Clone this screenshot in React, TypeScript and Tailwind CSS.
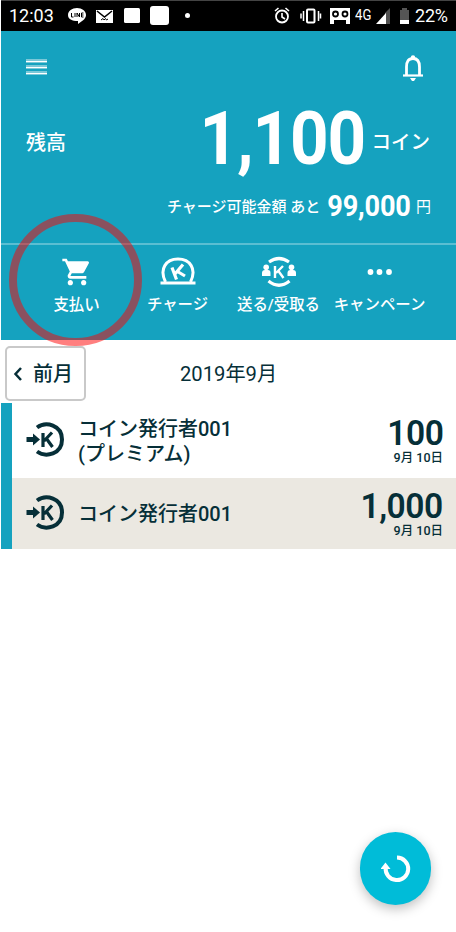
import type { ReactNode } from 'react';
import { MdShoppingCart } from 'react-icons/md';

function StatusBar() {
  return (
    <div className="flex h-[31px] items-center border-t border-[#444] bg-black text-white">
      <span className="ml-2 w-[59px] whitespace-nowrap text-[18px] leading-none">12:03</span>
      <svg width="130" height="30" viewBox="68 1 130 30" fill="currentColor">
        <path d="M77 8c5 0 9 3 9 7 0 3-2 5-8 9v-3c-6 0-10-2-10-6s4-7 9-7z" />
        <path d="M71.500 13v4h2M75 13v4M77 17v-4l2.500 4v-4M83.500 13h-2v4h2M81.500 15h2" fill="none" stroke="#000" />
        <path d="M96 10h17v13H96z" />
        <path d="M97 11l7.500 6 7.500-6" fill="none" stroke="#000" strokeWidth="1.600" />
        <path d="M101 20l2-1.500 1 1.500 1.500-1.500 1 1.500 1.500-1" fill="none" stroke="#000" />
        <rect x="124" y="8" width="16" height="15" rx="1.500" />
        <rect x="150" y="6" width="19" height="19" rx="3" />
        <circle cx="187.500" cy="15.500" r="2.500" />
      </svg>
      <svg width="157" height="30" viewBox="198 1 157 30" fill="none" stroke="currentColor">
        <circle cx="282" cy="16.500" r="6" strokeWidth="1.800" />
        <path d="M275 11l3.500-3M289 11l-3.500-3M282 13v4l3 2" strokeWidth="1.600" />
        <rect x="307" y="9.500" width="7.500" height="13" rx="1" strokeWidth="2" />
        <path d="M303.500 11v10M318.500 11v10M301 13.500v5M320.500 13.500v5" strokeWidth="1.500" />
        <path d="M330 8h20v16h-4v-4h-12v4h-4z" fill="currentColor" stroke="none" />
        <circle cx="335.500" cy="14" r="2.500" stroke="#000" strokeWidth="1.800" />
        <circle cx="345" cy="14" r="2.500" stroke="#000" strokeWidth="1.800" />
      </svg>
      <span className="w-[20px] origin-left scale-x-[0.85] text-[15.500px] leading-none">4G</span>
      <svg width="39" height="30" viewBox="375 1 39 30">
        <path d="M385 13l5-5v16h-5z" fill="#505050" />
        <path d="M376 24l10-11v11z" fill="#fff" />
        <path d="M402 8h5v2h2v11h-9V10h2z" fill="#555" />
        <path d="M400 20h9v4h-9z" fill="#fff" />
      </svg>
      <span className="ml-px whitespace-nowrap text-[18px] leading-none tracking-[-0.2px]">22%</span>
    </div>
  );
}

function ChargeIcon() {
  return (
    <svg className="mb-[3px]" width="36" height="28" viewBox="0 0 36 28" fill="none" stroke="currentColor">
      <path d="M5.500 25C-1 12 6 2 18 2s19 10 12.500 23" strokeWidth="3" />
      <path d="M0.500 26h35" strokeWidth="3" />
      <path d="M12 10.500l4.500 12M23 7.500l-8.500 10M17.500 14.500l7.500 4.500" strokeWidth="3.200" />
    </svg>
  );
}

function TransferIcon() {
  return (
    <svg width="34" height="32" viewBox="0 0 34 32" fill="currentColor">
      <path d="M7 6Q17-1 27 6M6.500 25Q17 33.500 27.500 25" fill="none" stroke="currentColor" strokeWidth="3.200" />
      <circle cx="4.200" cy="11.300" r="2.800" />
      <path d="M0 20v-3q0-3 3-3h3q2.500 0 2.500 3v3z" />
      <circle cx="29.500" cy="11.300" r="2.800" />
      <path d="M25.500 20v-3q0-3 3-3h2.500q3 0 3 3v3z" />
      <path d="M13 10v12M21 10l-7 7M16 14.500l5.500 7.500" fill="none" stroke="currentColor" strokeWidth="2.400" />
    </svg>
  );
}

function CoinIcon() {
  return (
    <svg className="mb-[2px]" width="39" height="36" viewBox="0 0 39 36" fill="none" stroke="#062f38">
      <path d="M11 5.500C20-1 36 3 36 17.500S20 36 11 29.500" strokeWidth="4" />
      <path d="M0.500 17.500h8" strokeWidth="5" />
      <path d="M7 11.500l7 6-7 6z" fill="#062f38" stroke="none" />
      <path d="M17 11v14M26 10.500l-8 8.500M20 16l6.500 9" strokeWidth="3.200" />
    </svg>
  );
}

const actions = [
  { label: '支払い', icon: <MdShoppingCart className="h-[34px] w-[32px]" /> },
  { label: 'チャージ', icon: <ChargeIcon /> },
  { label: '送る/受取る', icon: <TransferIcon /> },
  {
    label: 'キャンペーン',
    icon: (
      <svg width="26" height="8" viewBox="0 0 26 8" fill="currentColor">
        <circle cx="3.500" cy="4" r="2.900" />
        <circle cx="12.500" cy="4" r="2.900" />
        <circle cx="22" cy="4" r="2.900" />
      </svg>
    ),
  },
];

function HistoryRow({ name, amount, className }: { name: ReactNode; amount: string; className: string }) {
  return (
    <div className={`flex items-center border-l-[11px] border-[#15a2bf] pr-[13px] pl-[14px] ${className}`}>
      <CoinIcon />
      <div className="ml-[13px] flex-1 whitespace-nowrap pt-[2px] text-[20px] leading-[25px] font-medium">{name}</div>
      <div className="flex flex-col items-end whitespace-nowrap">
        <span className="origin-right scale-x-[0.96] pt-px text-[35px] leading-[34px] font-semibold tracking-[-0.5px]">{amount}</span>
        <span className="text-[12.500px] leading-[14px] font-medium">9月 10日</span>
      </div>
    </div>
  );
}

export default function App() {
  return (
    <main className="relative h-[932px] w-[456px] overflow-hidden bg-white pl-px font-[Roboto,'Noto_Sans_CJK_JP',sans-serif] text-[#062f38]">
      <StatusBar />

      <header className="h-[309px] bg-[#15a2bf] text-white">
        <div className="flex h-[72px] items-center justify-between pr-[33px] pl-[25px]">
          <div className="flex w-[21px] flex-col gap-[2px]">
            <div className="h-1 border-t-2 border-b border-[#7ac8d8] bg-white"></div>
            <div className="h-1 border-t-2 border-b border-[#7ac8d8] bg-white"></div>
            <div className="h-1 border-t-2 border-b border-[#7ac8d8] bg-white"></div>
          </div>
          <svg className="mt-[2px]" width="20" height="26" viewBox="0 0 20 26" fill="none" stroke="currentColor" strokeWidth="2.800">
            <path d="M3.500 20v-8c0-5.500 2-8.500 6.500-8.500s6.500 3 6.500 8.500v8" />
            <path d="M0 20.500h20" strokeWidth="2.200" />
            <circle cx="10" cy="2.400" r="2.200" fill="currentColor" stroke="none" />
            <path d="M7 23h6l-2 3H9z" fill="currentColor" stroke="none" />
          </svg>
        </div>

        <div className="flex h-[78px] items-center justify-between pr-[26px] pl-[25px]">
          <span className="pt-px text-[20px] leading-none font-medium">残高</span>
          <div className="flex items-center">
            <span className="mr-[6px] origin-right scale-x-[0.91] pb-[7px] text-[74px] leading-[70px] font-bold tracking-[-1.2px]">1,100</span>
            <span className="pt-[2px] text-[19.500px] leading-none font-medium">コイン</span>
          </div>
        </div>

        <div className="flex h-[62px] items-center justify-end pr-[25px] pb-[9px]">
          <span className="text-[15px] leading-none font-medium">チャージ可能金額 あと</span>
          <span className="origin-right scale-x-[0.92] pb-[2px] text-[29.500px] leading-none font-bold tracking-[-0.2px]">99,000</span>
          <span className="ml-[5px] text-[15px] leading-none">円</span>
        </div>

        <div className="flex h-[97px] border-t-2 border-white/30 pl-[25px]">
          {actions.map((action) => (
            <div key={action.label} className="flex w-[101px] flex-col items-center">
              <div className="flex h-[47px] items-center pt-[7px]">{action.icon}</div>
              <span className="whitespace-nowrap text-[15.400px] leading-[26px] font-medium">{action.label}</span>
            </div>
          ))}
        </div>
      </header>

      <div className="flex h-[63px] items-start pt-[6px] pl-[4px]">
        <button className="flex h-[55px] w-[81px] items-center gap-[10px] rounded-[5px] border-2 border-[#c9c9c9] pl-[6px] text-[20px] font-medium">
          <svg width="10" height="14" viewBox="0 0 10 14" fill="none" stroke="currentColor" strokeWidth="2.500">
            <path d="M8 1L2.500 7 8 13" />
          </svg>
          前月
        </button>
        <span className="ml-[94px] pt-[13px] text-[20.200px] leading-[30px]">2019年9月</span>
      </div>

      <HistoryRow className="h-[75px]" amount="100" name={<>コイン発行者001<br />(プレミアム)</>} />
      <HistoryRow className="h-[71px] bg-[#ebe8e1]" amount="1,000" name="コイン発行者001" />

      <div className="absolute top-[214px] left-[9px] h-[132px] w-[133px] rounded-full border-8 border-[#ff0000]/50"></div>

      <button className="absolute top-[832px] left-[360px] flex h-[73px] w-[71px] items-center justify-center rounded-full bg-[#00bcd8] text-white shadow-[0_4px_12px_rgba(0,0,0,0.25)]">
        <svg width="30" height="28" viewBox="0 0 30 28" fill="none" stroke="currentColor">
          <path d="M16 2.500a11.300 11.300 0 1 1-11.300 10" strokeWidth="4" />
          <path d="M-0.500 14L4.500 7.500l5 6.500z" fill="currentColor" stroke="none" />
        </svg>
      </button>
    </main>
  );
}
